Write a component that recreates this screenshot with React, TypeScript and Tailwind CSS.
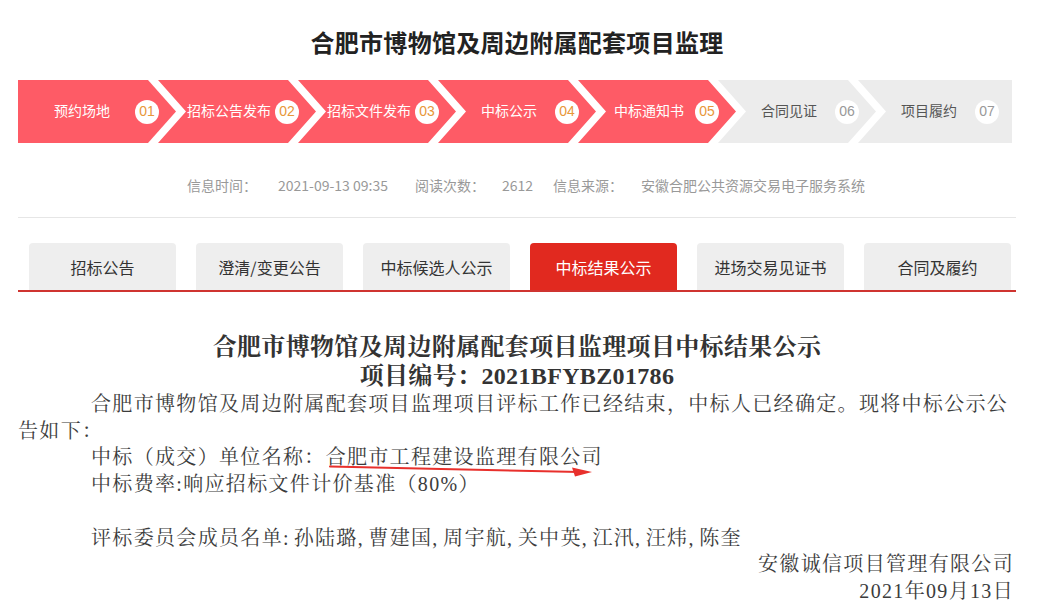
import clsx from "clsx";

const steps = [
  { name: "预约场地", no: "01", done: true },
  { name: "招标公告发布", no: "02", done: true },
  { name: "招标文件发布", no: "03", done: true },
  { name: "中标公示", no: "04", done: true },
  { name: "中标通知书", no: "05", done: true },
  { name: "合同见证", no: "06", done: false },
  { name: "项目履约", no: "07", done: false },
];

const tabs = ["招标公告", "澄清/变更公告", "中标候选人公示", "中标结果公示", "进场交易见证书", "合同及履约"];

const members = ["孙陆璐", "曹建国", "周宇航", "关中英", "江汛", "汪炜", "陈奎"];

const serif = "font-['Liberation_Serif','Noto_Serif_CJK_SC','Noto_Sans_CJK_SC',serif]";

const StepBar = () => (
  <div className="flex h-[63px] ml-[18px]">
    {steps.map((s, i) => {
      const first = i === 0;
      const last = i === steps.length - 1;
      return (
        <div
          key={s.no}
          className={clsx(
            "h-full flex items-center shrink-0",
            s.done ? "bg-[#fe5b66] text-white" : "bg-[#ececec] text-[#555]",
            first && "w-[158px] pl-[18px] [clip-path:polygon(0_0,calc(100%_-_28px)_0,100%_50%,calc(100%_-_28px)_100%,0_100%)]",
            !first && !last && "w-[158px] -ml-[18px] pl-[28px] [clip-path:polygon(0_0,calc(100%_-_28px)_0,100%_50%,calc(100%_-_28px)_100%,0_100%,28px_50%)]",
            last && "w-[154px] -ml-[18px] pl-[28px] [clip-path:polygon(0_0,100%_0,100%_100%,0_100%,28px_50%)]"
          )}
        >
          <span className={clsx("text-[14px] text-center whitespace-nowrap -mt-[2px]", first ? "w-[92px]" : "w-[86px]")}>
            {s.name}
          </span>
          <span
            className={clsx(
              "w-[24px] h-[24px] rounded-full bg-white flex items-center justify-center text-[14px] font-['Liberation_Sans',sans-serif]",
              first ? "ml-[7px]" : "ml-[3px]",
              s.done ? "text-[#e8973a]" : "text-[#999]"
            )}
          >
            {s.no}
          </span>
        </div>
      );
    })}
  </div>
);

export default function App() {
  return (
    <div className="w-[1058px] h-[609px] overflow-hidden bg-white font-['Noto_Sans_CJK_SC','Liberation_Sans',sans-serif] text-[#333]">
      <div className="w-[998px] ml-[18px] h-[80px] pt-[4px] flex items-center justify-center">
        <h1 className="text-[24px] font-bold text-[#222] tracking-[0.3px]">合肥市博物馆及周边附属配套项目监理</h1>
      </div>

      <StepBar />

      <div className="w-[998px] ml-[18px] h-[75px] pt-[11px] pl-[169px] flex items-center text-[14px] text-[#999] whitespace-nowrap border-b border-[#e6e6e6]">
        <span className="w-[70px]">信息时间：</span>
        <span className="w-[119px] ml-[21px]">2021-09-13 09:35</span>
        <span className="w-[70px] ml-[18px]">阅读次数：</span>
        <span className="w-[33px] ml-[17px]">2612</span>
        <span className="w-[70px] ml-[18px]">信息来源：</span>
        <span className="ml-[18px]">安徽合肥公共资源交易电子服务系统</span>
      </div>

      <div className="w-[998px] ml-[18px] mt-[25px] pl-[11px] flex gap-[20px] border-b-2 border-[#cf3430]">
        {tabs.map((t, i) => (
          <div
            key={t}
            className={clsx(
              "w-[147px] h-[47px] rounded-t-[4px] flex items-center justify-center text-[16px]",
              i === 3 ? "bg-[#e1291f] text-white" : "bg-[#eeeeee] text-[#333]"
            )}
          >
            {t}
          </div>
        ))}
      </div>

      <div className={clsx("w-[998px] ml-[18px] mt-[41px] text-[#3c3c3c]", serif)}>
        <div className="text-center text-[24px] leading-[29px] font-bold text-[#333] tracking-[0.35px]">
          <div>合肥市博物馆及周边附属配套项目监理项目中标结果公示</div>
          <div>项目编号：2021BFYBZ01786</div>
        </div>
        <div className="text-[20px] leading-[26.7px] tracking-[1.33px]">
          <div className="pl-[73px] whitespace-nowrap">
            合肥市博物馆及周边附属配套项目监理项目评标工作已经结束，中标人已经确定。现将中标公示公
          </div>
          <div>告如下：</div>
          <div className="pl-[73px] relative">
            中标（成交）单位名称：合肥市工程建设监理有限公司
            <svg className="absolute left-[310px] top-[18px]" width="270" height="20" viewBox="0 0 270 20">
              <path d="M2 4.5 C 80 6, 180 8.5, 252 10" stroke="#e8302c" strokeWidth="2" fill="none" strokeLinecap="round" />
              <polygon points="244,5.5 264,10 247,14.5" fill="#e8302c" />
            </svg>
          </div>
          <div className="pl-[73px]">中标费率:响应招标文件计价基准（80%）</div>
          <div className="h-[26.7px]" />
          <div className="pl-[73px] whitespace-nowrap">
            评标委员会成员名单<span className="inline-block w-[10.7px]">:</span>
            {members.map((m, i) => (
              <span key={m}>
                {m}
                {i < members.length - 1 && <span className="inline-block w-[10.7px]">,</span>}
              </span>
            ))}
          </div>
          <div className="text-right pr-[2px]">安徽诚信项目管理有限公司</div>
          <div className="text-right pr-[2px]">2021年09月13日</div>
        </div>
      </div>
    </div>
  );
}
